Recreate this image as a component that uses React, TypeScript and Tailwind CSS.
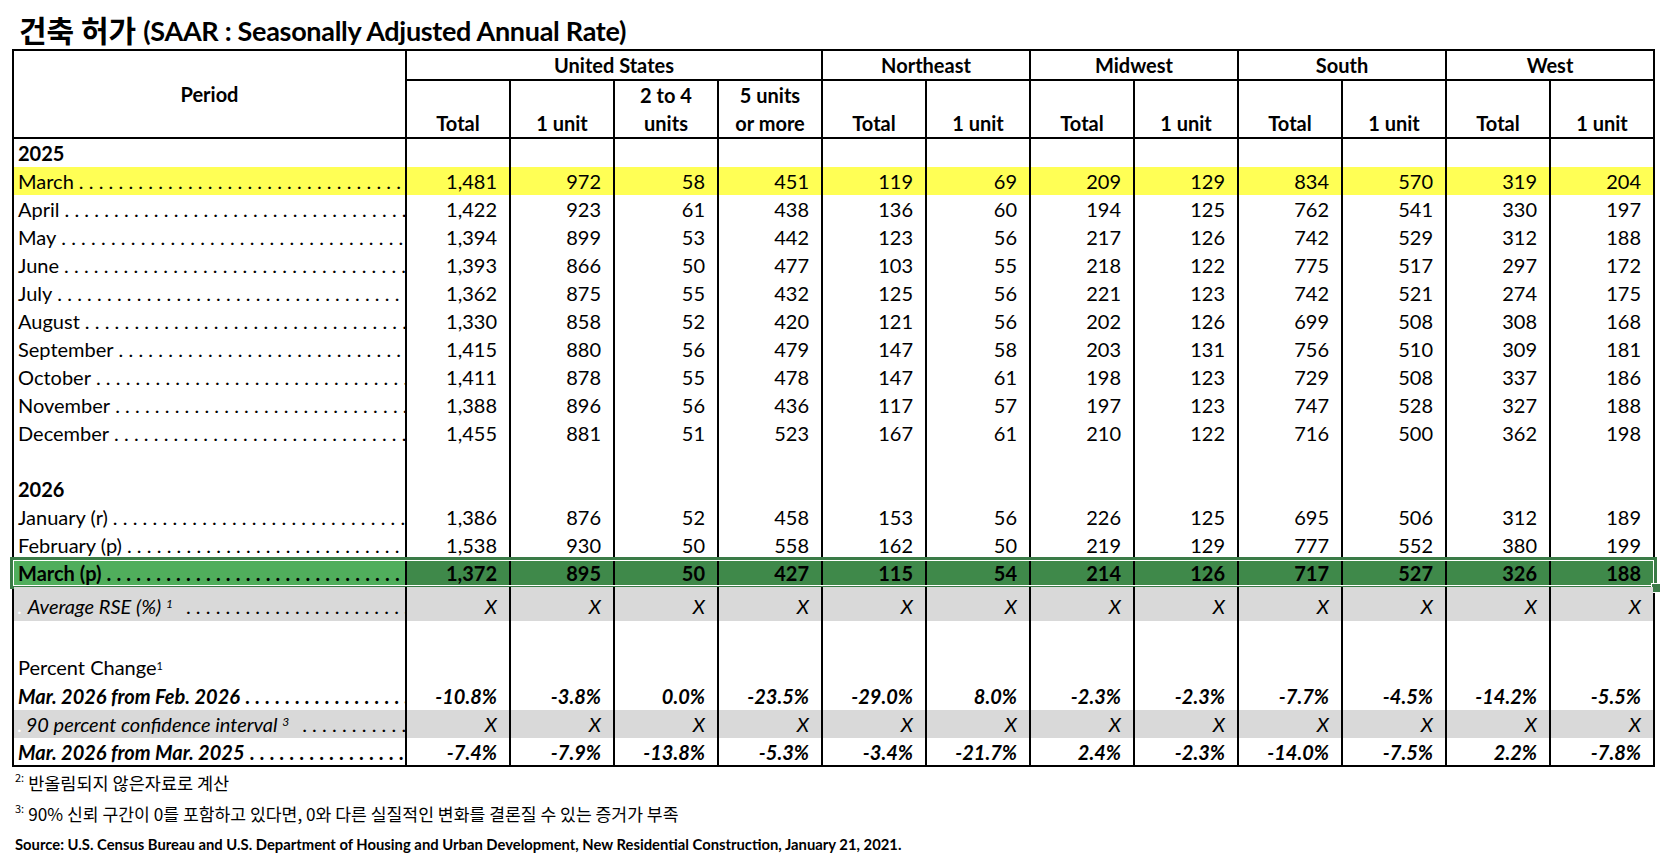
import React from "react";

type Kind = "year" | "plain" | "yellow" | "green" | "rse" | "blank" | "pctHead" | "pct" | "ci";

interface RowDef {
  label: string;
  vals?: string;
  kind: Kind;
  h: string;
}

const X12 = "X X X X X X X X X X X X";

const ROWS: RowDef[] = [
  { label: "2025", kind: "year", h: "h-[28px]" },
  { label: "March", vals: "1,481 972 58 451 119 69 209 129 834 570 319 204", kind: "yellow", h: "h-[28px]" },
  { label: "April", vals: "1,422 923 61 438 136 60 194 125 762 541 330 197", kind: "plain", h: "h-[28px]" },
  { label: "May", vals: "1,394 899 53 442 123 56 217 126 742 529 312 188", kind: "plain", h: "h-[28px]" },
  { label: "June", vals: "1,393 866 50 477 103 55 218 122 775 517 297 172", kind: "plain", h: "h-[28px]" },
  { label: "July", vals: "1,362 875 55 432 125 56 221 123 742 521 274 175", kind: "plain", h: "h-[28px]" },
  { label: "August", vals: "1,330 858 52 420 121 56 202 126 699 508 308 168", kind: "plain", h: "h-[28px]" },
  { label: "September", vals: "1,415 880 56 479 147 58 203 131 756 510 309 181", kind: "plain", h: "h-[28px]" },
  { label: "October", vals: "1,411 878 55 478 147 61 198 123 729 508 337 186", kind: "plain", h: "h-[28px]" },
  { label: "November", vals: "1,388 896 56 436 117 57 197 123 747 528 327 188", kind: "plain", h: "h-[28px]" },
  { label: "December", vals: "1,455 881 51 523 167 61 210 122 716 500 362 198", kind: "plain", h: "h-[28px]" },
  { label: "", kind: "blank", h: "h-[28px]" },
  { label: "2026", kind: "year", h: "h-[28px]" },
  { label: "January (r)", vals: "1,386 876 52 458 153 56 226 125 695 506 312 189", kind: "plain", h: "h-[28px]" },
  { label: "February (p)", vals: "1,538 930 50 558 162 50 219 129 777 552 380 199", kind: "plain", h: "h-[28px]" },
  { label: "March (p)", vals: "1,372 895 50 427 115 54 214 126 717 527 326 188", kind: "green", h: "h-[28px]" },
  { label: "Average RSE (%)", vals: X12, kind: "rse", h: "h-[34px]" },
  { label: "", kind: "blank", h: "h-[30px]" },
  { label: "Percent Change", kind: "pctHead", h: "h-[30px]" },
  { label: "Mar. 2026 from Feb. 2026", vals: "-10.8% -3.8% 0.0% -23.5% -29.0% 8.0% -2.3% -2.3% -7.7% -4.5% -14.2% -5.5%", kind: "pct", h: "h-[29px]" },
  { label: "90 percent confidence interval", vals: X12, kind: "ci", h: "h-[28px]" },
  { label: "Mar. 2026 from Mar. 2025", vals: "-7.4% -7.9% -13.8% -5.3% -3.4% -21.7% 2.4% -2.3% -14.0% -7.5% 2.2% -7.8%", kind: "pct", h: "h-[27px]" },
];

const DOTS = ".".repeat(60);

function Leader({ bold }: { bold?: boolean }) {
  return (
    <span className={`min-w-0 flex-1 overflow-hidden whitespace-nowrap pl-[5px] tracking-[5.2px] ${bold ? "font-bold" : ""}`}>
      {DOTS}
    </span>
  );
}

function Label({ row }: { row: RowDef }) {
  switch (row.kind) {
    case "year":
      return <span className="pl-[4px] font-bold">{row.label}</span>;
    case "blank":
      return null;
    case "pctHead":
      return (
        <span className="pl-[4px] pt-[2px]">
          Percent Change<sup className="text-[11px]">1</sup>
        </span>
      );
    case "rse":
      return (
        <>
          <span className="pl-[3px] text-white">.</span>
          <span className="whitespace-nowrap pl-[6px] italic">
            Average RSE (%) <sup className="text-[12px]">1</sup>
          </span>
          <span className="w-[8px]" />
          <Leader />
        </>
      );
    case "ci":
      return (
        <>
          <span className="pl-[3px] text-white">.</span>
          <span className="whitespace-nowrap pl-[4px] italic">
            90 percent confidence interval <sup className="text-[12px]">3</sup>
          </span>
          <span className="w-[8px]" />
          <Leader />
        </>
      );
    case "pct":
      return (
        <>
          <span className="whitespace-nowrap pl-[4px] font-bold italic">{row.label}</span>
          <Leader bold />
        </>
      );
    case "green":
      return (
        <>
          <span className="whitespace-nowrap pl-[4px] font-bold">{row.label}</span>
          <Leader bold />
        </>
      );
    default:
      return (
        <>
          <span className="whitespace-nowrap pl-[4px]">{row.label}</span>
          <Leader />
        </>
      );
  }
}

function DataRow({ row }: { row: RowDef }) {
  const vals = row.vals ? row.vals.split(" ") : Array(12).fill("");
  const rowBg =
    row.kind === "yellow"
      ? "bg-[#ffff55]"
      : row.kind === "rse" || row.kind === "ci"
        ? "bg-[#d9d9d9]"
        : "";
  const labelBg = row.kind === "green" ? "bg-[#50ae5c]" : "";
  const valBg = row.kind === "green" ? "bg-[#3f894a]" : "";
  const valFont =
    row.kind === "green"
      ? "font-bold"
      : row.kind === "pct"
        ? "font-bold italic"
        : row.kind === "rse" || row.kind === "ci"
          ? "italic"
          : "";

  return (
    <div className={`relative grid grid-cols-[391px_repeat(12,104px)] ${row.h} ${rowBg}`}>
      <div className={`flex items-center overflow-hidden ${labelBg} ${row.kind === "rse" ? "pt-[4px]" : ""}`}>
        <Label row={row} />
      </div>
      {vals.map((v, i) => (
        <div
          key={i}
          className={`flex items-center justify-end border-l-2 border-black pr-[12px] ${valBg} ${valFont} ${row.kind === "rse" ? "pt-[4px]" : ""}`}
        >
          {v}
        </div>
      ))}

      {/* Excel selection frame */}
      {row.kind === "green" && (
        <div className="pointer-events-none absolute -bottom-[2px] -left-[4px] -right-[4px] -top-[2px] border-[3px] border-[#3a7b47]">
          <div className="h-full w-full border-[1.5px] border-white" />
          <div className="absolute -bottom-[7px] -right-[7px] h-[10px] w-[10px] border border-white bg-[#3a7b47]" />
        </div>
      )}
    </div>
  );
}

const GROUPS = [
  { name: "United States", span: "col-span-4" },
  { name: "Northeast", span: "col-span-2" },
  { name: "Midwest", span: "col-span-2" },
  { name: "South", span: "col-span-2" },
  { name: "West", span: "col-span-2" },
];

const SUBHEADS: string[][] = [
  ["Total"],
  ["1 unit"],
  ["2 to 4", "units"],
  ["5 units", "or more"],
  ["Total"], ["1 unit"],
  ["Total"], ["1 unit"],
  ["Total"], ["1 unit"],
  ["Total"], ["1 unit"],
];

export default function App() {
  return (
    <div className="min-h-screen w-[1676px] bg-white font-[Lato,'Noto_Sans_CJK_KR',sans-serif] text-[20px] text-black">
      {/* Title */}
      <div className="flex h-[49px] items-end pb-[5px] pl-[19px] text-[27px] font-bold leading-none">
        <span className="font-['Noto_Sans_CJK_KR',sans-serif] text-[30px]">건축 허가</span>
        <span className="pl-[7px] tracking-[-0.3px]">(SAAR : Seasonally Adjusted Annual Rate)</span>
      </div>

      {/* Table */}
      <div className="ml-[12px] w-[1643px] border-2 border-black leading-none">
        <div className="grid grid-cols-[391px_repeat(12,104px)] grid-rows-[30px_56px] border-b-2 border-black font-bold">
          <div className="row-span-2 flex items-center justify-center">Period</div>
          {GROUPS.map((g) => (
            <div key={g.name} className={`${g.span} flex items-center justify-center border-b-2 border-l-2 border-black`}>
              {g.name}
            </div>
          ))}
          {SUBHEADS.map((lines, i) => (
            <div key={i} className="flex flex-col items-center justify-end border-l-2 border-black leading-[28px]">
              {lines.map((l) => (
                <span key={l}>{l}</span>
              ))}
            </div>
          ))}
        </div>

        {ROWS.map((r, i) => (
          <DataRow key={i} row={r} />
        ))}
      </div>

      {/* Notes */}
      <div className="pl-[15px] font-['Noto_Sans_CJK_KR',sans-serif] text-[17.5px] leading-none">
        <div className="flex h-[31px] items-center">
          <sup className="pr-[4px] text-[11px]">2:</sup>
          <span>반올림되지 않은자료로 계산</span>
        </div>
        <div className="flex h-[31px] items-center">
          <sup className="pr-[4px] text-[11px]">3:</sup>
          <span className="text-[17.2px]">90% 신뢰 구간이 0를 포함하고 있다면, 0와 다른 실질적인 변화를 결론질 수 있는 증거가 부족</span>
        </div>
        <div className="flex h-[30px] items-center font-[Lato,sans-serif] text-[14.8px] font-bold">
          Source: U.S. Census Bureau and U.S. Department of Housing and Urban Development, New Residential Construction, January 21, 2021.
        </div>
      </div>
    </div>
  );
}
